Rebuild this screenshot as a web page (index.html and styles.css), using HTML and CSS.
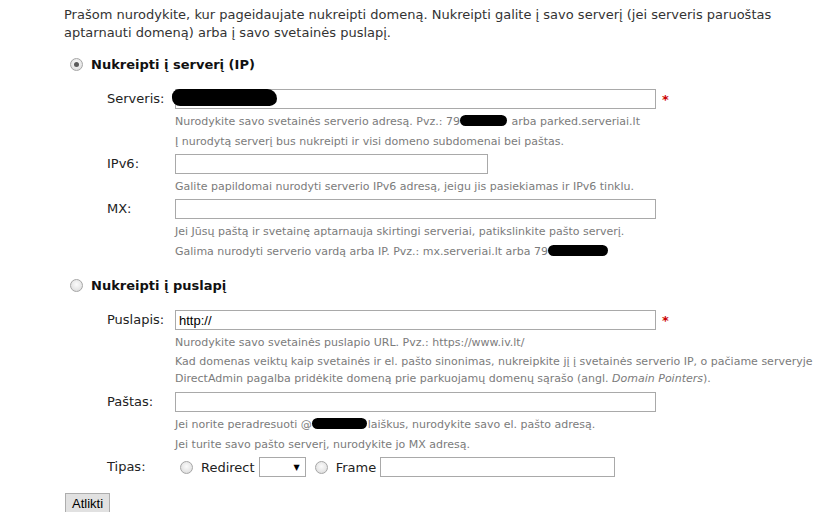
FILE: index.html
```html
<!DOCTYPE html>
<html lang="lt">
<head>
  <meta charset="UTF-8">
  <title>Nukreipti domeną</title>
  <link rel="stylesheet" href="styles.css">
</head>
<body>

<div class="page">
  <p class="intro">Prašom nurodykite, kur pageidaujate nukreipti domeną. Nukreipti galite į savo serverį (jei serveris paruoštas aptarnauti domeną) arba į savo svetainės puslapį.</p>

  <!-- Server -->
  <div class="choice">
    <span class="radio checked"></span>
    <span class="choice-title">Nukreipti į serverį (IP)</span>
  </div>

  <div class="row">
    <label class="label">Serveris:</label>
    <div class="field">
      <div class="control">
        <input type="text" class="text wide">
        <span class="mask mask-server"></span>
        <span class="req">*</span>
      </div>
      <p class="help">Nurodykite savo svetainės serverio adresą. Pvz.: 79<span class="mask mask-ip"></span> arba parked.serveriai.lt</p>
      <p class="help">Į nurodytą serverį bus nukreipti ir visi domeno subdomenai bei paštas.</p>
    </div>
  </div>

  <div class="row">
    <label class="label">IPv6:</label>
    <div class="field">
      <div class="control"><input type="text" class="text short"></div>
      <p class="help">Galite papildomai nurodyti serverio IPv6 adresą, jeigu jis pasiekiamas ir IPv6 tinklu.</p>
    </div>
  </div>

  <div class="row">
    <label class="label">MX:</label>
    <div class="field">
      <div class="control"><input type="text" class="text wide"></div>
      <p class="help">Jei Jūsų paštą ir svetainę aptarnauja skirtingi serveriai, patikslinkite pašto serverį.</p>
      <p class="help">Galima nurodyti serverio vardą arba IP. Pvz.: mx.serveriai.lt arba 79<span class="mask mask-ip2"></span></p>
    </div>
  </div>

  <!-- Page -->
  <div class="choice choice-second">
    <span class="radio"></span>
    <span class="choice-title">Nukreipti į puslapį</span>
  </div>

  <div class="row">
    <label class="label">Puslapis:</label>
    <div class="field">
      <div class="control">
        <input type="text" class="text wide" value="http://">
        <span class="req">*</span>
      </div>
      <p class="help">Nurodykite savo svetainės puslapio URL. Pvz.: https://www.iv.lt/</p>
      <p class="help help-long">Kad domenas veiktų kaip svetainės ir el. pašto sinonimas, nukreipkite jį į svetainės serverio IP, o pačiame serveryje<br>DirectAdmin pagalba pridėkite domeną prie parkuojamų domenų sąrašo (angl. <em>Domain Pointers</em>).</p>
    </div>
  </div>

  <div class="row">
    <label class="label">Paštas:</label>
    <div class="field">
      <div class="control"><input type="text" class="text wide"></div>
      <p class="help">Jei norite peradresuoti @<span class="mask mask-mail"></span>laiškus, nurodykite savo el. pašto adresą.</p>
      <p class="help">Jei turite savo pašto serverį, nurodykite jo MX adresą.</p>
    </div>
  </div>

  <div class="row">
    <label class="label">Tipas:</label>
    <div class="control type-control">
      <span class="radio"></span>
      <span class="type-name">Redirect</span>
      <span class="select"><span class="arrow">&#9660;</span></span>
      <span class="radio radio-frame"></span>
      <span class="type-name">Frame</span>
      <input type="text" class="text frame">
    </div>
  </div>

  <button type="submit" class="submit">Atlikti</button>
</div>

</body>
</html>
```

FILE: styles.css
```css
body {
  margin: 0;
  background-color: #ffffff;
  font-family: "DejaVu Sans", Verdana, sans-serif;
  font-size: 13px;
  color: #222222;
}

.page {
  padding: 6px 0 0 64px;
}

.intro {
  margin: 0 0 12px;
  width: 730px;
  line-height: 18px;
  color: #333333;
}

/* Radio headings */
.choice {
  display: flex;
  align-items: center;
  height: 20px;
  margin: 0 0 15px 6px;
}

.choice-second {
  margin-top: 16px;
}

.choice-title {
  margin-left: 8px;
  font-weight: bold;
  color: #111111;
}

.radio {
  display: inline-block;
  box-sizing: border-box;
  width: 13px;
  height: 13px;
  border: 1px solid #a6a6a6;
  border-radius: 50%;
  background: radial-gradient(circle at 50% 40%, #fbfbfb 0%, #e6e6e6 60%, #d2d2d2 100%);
  position: relative;
  flex-shrink: 0;
}

.radio.checked::after {
  content: "";
  position: absolute;
  left: 3px;
  top: 3px;
  width: 5px;
  height: 5px;
  border-radius: 50%;
  background-color: #5a5a5a;
}

/* Form rows */
.row {
  display: grid;
  grid-template-columns: 68px auto;
  margin: 5px 0 0 43px;
}

.label {
  line-height: 20px;
  color: #222222;
}

.control {
  display: flex;
  align-items: center;
  position: relative;
  height: 20px;
}

.text {
  box-sizing: border-box;
  height: 20px;
  margin: 0;
  padding: 0 3px;
  border: 1px solid #a9a9a9;
  background-color: #ffffff;
  font-family: "Liberation Sans", Arial, sans-serif;
  font-size: 13px;
  color: #000000;
  outline: none;
}

.wide {
  width: 481px;
}

.short {
  width: 313px;
}

.req {
  margin-left: 6px;
  color: #cc0000;
  font-weight: bold;
  font-size: 13px;
}

.help {
  margin: 0;
  padding-top: 6px;
  font-size: 11px;
  line-height: 14px;
  color: #7b7b7b;
  white-space: nowrap;
}

.help-long {
  padding-top: 3px;
  line-height: 17px;
}

/* Redacted parts */
.mask {
  display: inline-block;
  height: 11px;
  background-color: #000000;
  border-radius: 6px;
  vertical-align: -1px;
}

.mask-server {
  position: absolute;
  left: -3px;
  top: 0;
  width: 105px;
  height: 17px;
  border-radius: 9px 12px 9px 10px;
}

.mask-ip {
  width: 47px;
  margin-right: 1px;
}

.mask-ip2 {
  width: 60px;
}

.mask-mail {
  width: 55px;
  margin-right: 1px;
}

/* Type row */
.type-control {
  padding-left: 5px;
}

.type-name {
  margin: 0 4px 0 8px;
  color: #222222;
}

.radio-frame {
  margin-left: 9px;
}

.select {
  box-sizing: border-box;
  display: flex;
  align-items: center;
  justify-content: flex-end;
  width: 47px;
  height: 20px;
  padding-right: 5px;
  border: 1px solid #a9a9a9;
  background-color: #ffffff;
}

.arrow {
  font-size: 8px;
  color: #000000;
}

.frame {
  width: 235px;
}

.submit {
  display: block;
  margin: 16px 0 0 1px;
  padding: 1px 6px;
  height: 21px;
  border: 1px solid #adadad;
  background-color: #e1e1e1;
  font-family: "Liberation Sans", Arial, sans-serif;
  font-size: 13px;
  color: #000000;
}
```
